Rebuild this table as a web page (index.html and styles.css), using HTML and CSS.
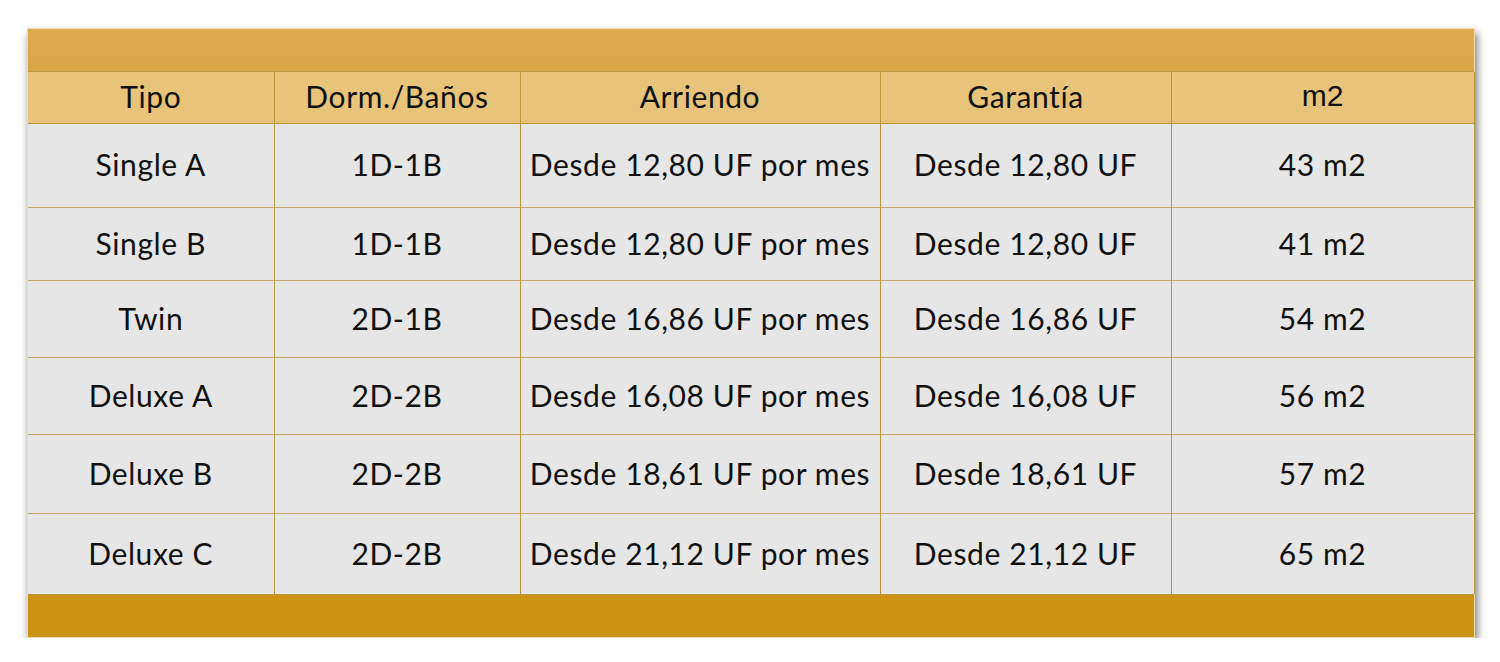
FILE: index.html
```html
<!DOCTYPE html>
<html lang="es">
<head>
<meta charset="utf-8">
<link rel="stylesheet" href="styles.css">
</head>
<body>
<div class="card">
  <div class="band-top"></div>
  <table class="grid">
    <colgroup>
      <col class="c1"><col class="c2"><col class="c3"><col class="c4"><col class="c5">
    </colgroup>
    <thead>
      <tr class="head">
        <th>Tipo</th><th>Dorm./Baños</th><th>Arriendo</th><th>Garantía</th><th class="alt">m2</th>
      </tr>
    </thead>
    <tbody>
      <tr class="r1"><td>Single A</td><td>1D-1B</td><td>Desde 12,80 UF por mes</td><td>Desde 12,80 UF</td><td>43 m2</td></tr>
      <tr class="r2"><td>Single B</td><td>1D-1B</td><td>Desde 12,80 UF por mes</td><td>Desde 12,80 UF</td><td>41 m2</td></tr>
      <tr class="r3"><td>Twin</td><td>2D-1B</td><td>Desde 16,86 UF por mes</td><td>Desde 16,86 UF</td><td>54 m2</td></tr>
      <tr class="r4"><td>Deluxe A</td><td>2D-2B</td><td>Desde 16,08 UF por mes</td><td>Desde 16,08 UF</td><td>56 m2</td></tr>
      <tr class="r5"><td>Deluxe B</td><td>2D-2B</td><td>Desde 18,61 UF por mes</td><td>Desde 18,61 UF</td><td>57 m2</td></tr>
      <tr class="r6"><td>Deluxe C</td><td>2D-2B</td><td>Desde 21,12 UF por mes</td><td>Desde 21,12 UF</td><td>65 m2</td></tr>
    </tbody>
  </table>
  <div class="band-bottom"></div>
</div>
</body>
</html>
```
FILE: styles.css
```css
html, body {
  margin: 0;
  padding: 0;
  background: #ffffff;
}
body {
  padding: 28px 0 0 27px;
  font-family: Lato, "Noto Sans", sans-serif;
  color: #111;
}
.card {
  width: 1446px;
  border: 1px solid #f0dcb0;
  box-shadow: 2px 5px 8px rgba(0, 0, 0, 0.55);
  background: #e6e6e6;
}
.band-top {
  height: 42px;
  background: linear-gradient(#dfab52, #d9a646);
  border-bottom: 1px solid #c09a4a;
}
.band-bottom {
  height: 42px;
  background: #cc9214;
  border-top: 1px solid #b8963e;
}
.grid {
  width: 1446px;
  border-collapse: collapse;
  table-layout: fixed;
}
.c1 { width: 246px; }
.c2 { width: 246px; }
.c3 { width: 360px; }
.c4 { width: 291px; }
.c5 { width: 303px; }
.grid th, .grid td {
  padding: 0 0 3px;
  text-align: center;
  vertical-align: middle;
  font-size: 30px;
  font-weight: 400;
  letter-spacing: 0.6px;
  white-space: nowrap;
  border-left: 1px solid #b8963e;
  border-top: 1px solid #c2a56a;
}
.grid th:first-child, .grid td:first-child { border-left: none; }
.grid th:last-child, .grid td:last-child { border-right: 1px solid #b8963e; }
.grid th {
  background: #e7c479;
  border-top: none;
  height: 48px;
}
.grid th.alt {
  font-family: "Liberation Sans", Arial, sans-serif;
  font-size: 30px;
  letter-spacing: 0;
}
.grid td { background: #e6e6e6; }
.r1 td { height: 80px; border-top: 1px solid #b8963e; }
.r2 td { height: 69px; }
.r3 td { height: 73px; }
.r4 td { height: 73px; }
.r5 td { height: 75px; }
.r6 td { height: 77px; }
```
